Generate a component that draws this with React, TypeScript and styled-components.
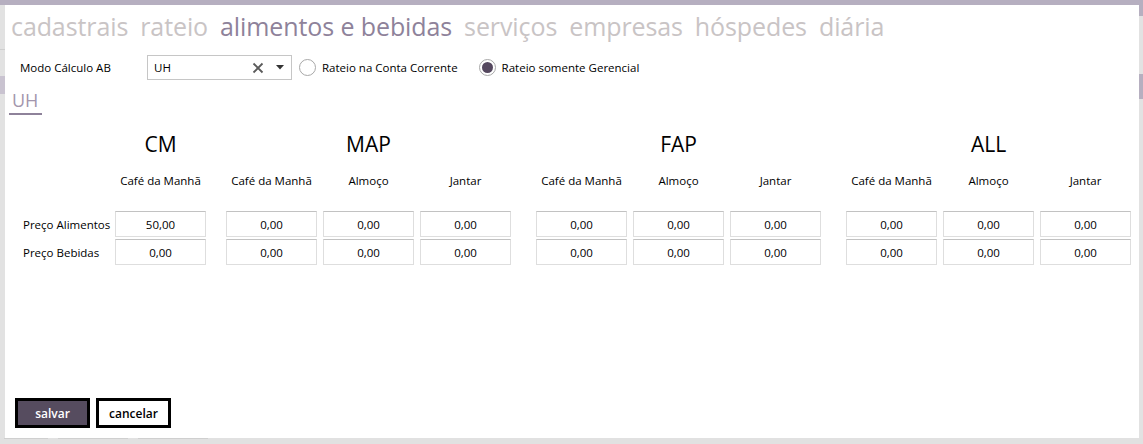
import React from "react";
import styled, { createGlobalStyle } from "styled-components";

const Global = createGlobalStyle`
  html, body { margin: 0; padding: 0; }
  body {
    width: 1143px; height: 444px; overflow: hidden;
    background: #e1e1e1;
    font-family: "Open Sans", "Noto Sans", sans-serif;
  }
`;

const Page = styled.div`
  width: 1143px; height: 444px;
  display: flex; flex-direction: column;
`;
const TopBar = styled.div`
  height: 5px; background: #b6afc0; flex: none;
`;
const Middle = styled.div`
  display: flex; height: 433px; flex: none;
`;
const SideStrip = styled.div<{ $w: number }>`
  width: ${(p) => p.$w}px; background: #e2e2e2; display: flex; flex-direction: column; flex: none;
`;
const StripMark = styled.div<{ $h: number; $mt: number; $c: string }>`
  height: ${(p) => p.$h}px; margin-top: ${(p) => p.$mt}px; background: ${(p) => p.$c};
`;
const BottomStrip = styled.div`
  height: 6px; background: #e1e1e1; display: flex; gap: 10px; padding-left: 4px;
`;
const BottomTab = styled.div<{ $w: number }>`
  width: ${(p) => p.$w}px; height: 1px; background: #cfcfcf;
`;

const Dialog = styled.div`
  width: 1134px; background: #fff;
  display: flex; flex-direction: column;
  padding-top: 4px; box-sizing: border-box;
`;

const Tabs = styled.div`
  display: flex; gap: 12px; padding-left: 6px; height: 34px; align-items: center;
`;
const Tab = styled.span<{ $active?: boolean }>`
  font-size: 25px; line-height: 34px; letter-spacing: -0.1px;
  color: ${(p) => (p.$active ? "#8e829a" : "#c9c4c5")};
`;

const OptionsRow = styled.div`
  display: flex; align-items: center; height: 25px; margin-top: 12px;
  padding-left: 15px; font-size: 11.5px; color: #000;
`;
const FieldLabel = styled.span`
  width: 127px; flex: none;
`;
const Select = styled.div`
  width: 145px; height: 25px; box-sizing: border-box;
  border: 1px solid #c6c6c6; display: flex; align-items: center;
  padding-left: 6px; padding-right: 7px;
`;
const SelectValue = styled.span` flex: 1; `;
const RadioGroup = styled.label<{ $ml: number }>`
  display: flex; align-items: center; gap: 6px; margin-left: ${(p) => p.$ml}px;
`;
const Radio = styled.span<{ $checked?: boolean }>`
  width: 17px; height: 17px; box-sizing: border-box; border-radius: 50%;
  border: 1px solid #a8a8a8; display: flex; align-items: center; justify-content: center;
  &::after {
    content: ""; width: 11px; height: 11px; border-radius: 50%;
    background: ${(p) => (p.$checked ? "#55485f" : "transparent")};
  }
`;

const SubTabs = styled.div`
  display: flex; padding-left: 4px; margin-top: 8px;
`;
const SubTab = styled.span`
  font-size: 18px; line-height: 24px; color: #a396ad;
  padding: 0 4px 1px 3px; border-bottom: 2px solid #8e829a;
`;

const Table = styled.div`
  display: grid;
  grid-template-columns: 94px 91px 8px 91px 91px 91px 13px 91px 91px 91px 13px 91px 91px 91px;
  column-gap: 6px;
  grid-template-rows: 32px 47px 26px 26px;
  row-gap: 2px;
  padding-left: 10px;
  margin-top: 13px;
  align-items: center;
`;
const GroupHead = styled.div<{ $col: number; $span: number }>`
  grid-row: 1; grid-column: ${(p) => p.$col} / span ${(p) => p.$span};
  text-align: center; font-size: 21px; color: #000;
`;
const ColHead = styled.div<{ $col: number }>`
  grid-row: 2; grid-column: ${(p) => p.$col}; align-self: start;
  text-align: center; font-size: 11.5px; line-height: 17px; color: #000; white-space: nowrap;
  margin-top: 10px;
`;
const RowLabel = styled.div<{ $row: number }>`
  grid-row: ${(p) => p.$row}; grid-column: 1;
  font-size: 11.5px; color: #000; padding-left: 8px; white-space: nowrap;
`;
const Cell = styled.div<{ $row: number; $col: number }>`
  grid-row: ${(p) => p.$row}; grid-column: ${(p) => p.$col};
  height: 26px; box-sizing: border-box;
  border: 1px solid #dedede; border-top-color: #c2c2c2;
  display: flex; align-items: center; justify-content: center;
  font-size: 11.5px; color: #000;
`;

const Buttons = styled.div`
  margin-top: auto; display: flex; gap: 6px; padding-left: 10px; padding-bottom: 10px;
`;
const Button = styled.button<{ $primary?: boolean }>`
  width: 75px; height: 30px; box-sizing: border-box;
  border: 3px solid #000;
  background: ${(p) => (p.$primary ? "#564c5f" : "#fff")};
  color: ${(p) => (p.$primary ? "#fff" : "#000")};
  font-family: "Open Sans", sans-serif; font-size: 12px; font-weight: 600;
  padding: 0; cursor: pointer;
`;

const groups = [
  { name: "CM", cols: [2], heads: ["Café da Manhã"] },
  { name: "MAP", cols: [4, 5, 6], heads: ["Café da Manhã", "Almoço", "Jantar"] },
  { name: "FAP", cols: [8, 9, 10], heads: ["Café da Manhã", "Almoço", "Jantar"] },
  { name: "ALL", cols: [12, 13, 14], heads: ["Café da Manhã", "Almoço", "Jantar"] },
];

export default function App() {
  return (
    <Page>
      <Global />
      <TopBar />
      <Middle>
        <SideStrip $w={5}>
          <StripMark $h={1} $mt={44} $c="#cfcfcf" />
          <StripMark $h={18} $mt={26} $c="#c9c3d0" />
        </SideStrip>
        <Dialog>
          <Tabs>
            <Tab>cadastrais</Tab>
            <Tab>rateio</Tab>
            <Tab $active>alimentos e bebidas</Tab>
            <Tab>serviços</Tab>
            <Tab>empresas</Tab>
            <Tab>hóspedes</Tab>
            <Tab>diária</Tab>
          </Tabs>
          <OptionsRow>
            <FieldLabel>Modo Cálculo AB</FieldLabel>
            <Select>
              <SelectValue>UH</SelectValue>
              <svg width="12" height="12" viewBox="0 0 12 12" style={{ marginRight: 12 }}>
                <path d="M1.5 1.5 L10.5 10.5 M10.5 1.5 L1.5 10.5" stroke="#5a5a5a" strokeWidth="1.8" />
              </svg>
              <svg width="8" height="5" viewBox="0 0 8 5">
                <path d="M0 0 H8 L4 4.5 Z" fill="#333" />
              </svg>
            </Select>
            <RadioGroup $ml={7}>
              <Radio />
              <span>Rateio na Conta Corrente</span>
            </RadioGroup>
            <RadioGroup $ml={21}>
              <Radio $checked />
              <span>Rateio somente Gerencial</span>
            </RadioGroup>
          </OptionsRow>
          <SubTabs>
            <SubTab>UH</SubTab>
          </SubTabs>
          <Table>
            {groups.map((g) => (
              <GroupHead key={g.name} $col={g.cols[0]} $span={g.cols.length}>{g.name}</GroupHead>
            ))}
            {groups.flatMap((g) =>
              g.cols.map((c, i) => <ColHead key={g.name + c} $col={c}>{g.heads[i]}</ColHead>)
            )}
            <RowLabel $row={3}>Preço Alimentos</RowLabel>
            <RowLabel $row={4}>Preço Bebidas</RowLabel>
            {[3, 4].flatMap((r) =>
              groups.flatMap((g) =>
                g.cols.map((c) => (
                  <Cell key={`${r}-${c}`} $row={r} $col={c}>
                    {r === 3 && c === 2 ? "50,00" : "0,00"}
                  </Cell>
                ))
              )
            )}
          </Table>
          <Buttons>
            <Button $primary>salvar</Button>
            <Button>cancelar</Button>
          </Buttons>
        </Dialog>
        <SideStrip $w={4}>
          <StripMark $h={11} $mt={0} $c="#b6afc0" />
          <StripMark $h={25} $mt={58} $c="#b6afc0" />
        </SideStrip>
      </Middle>
      <BottomStrip>
        <BottomTab $w={44} /><BottomTab $w={70} /><BottomTab $w={70} />
      </BottomStrip>
    </Page>
  );
}
